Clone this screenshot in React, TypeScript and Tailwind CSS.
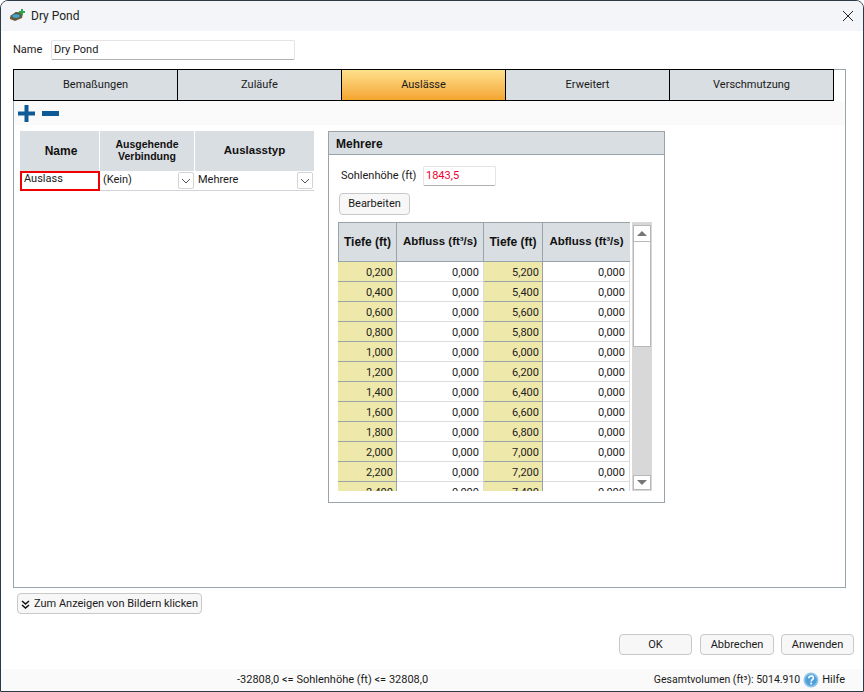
import type { ReactNode } from "react";

const tabs = ["Bemaßungen", "Zuläufe", "Auslässe", "Erweitert", "Verschmutzung"];

const left = ["0,200", "0,400", "0,600", "0,800", "1,000", "1,200", "1,400", "1,600", "1,800", "2,000", "2,200", "2,400"];
const right = ["5,200", "5,400", "5,600", "5,800", "6,000", "6,200", "6,400", "6,600", "6,800", "7,000", "7,200", "7,400"];

function HeadCell({ className, children }: { className: string; children: ReactNode }) {
  return (
    <div className={`flex items-center justify-center whitespace-nowrap bg-[#d9dee2] text-center font-['Liberation_Sans',sans-serif] font-bold text-[#111] ${className}`}>
      {children}
    </div>
  );
}

function Chevron() {
  return (
    <svg width="10" height="6" viewBox="0 0 10 6" fill="none" stroke="#555" strokeWidth="1">
      <path d="M1 1l4 4 4-4" />
    </svg>
  );
}

function Combo({ label, className }: { label: string; className: string }) {
  return (
    <div className={`flex h-5 items-center justify-between border-b border-[#d0d4d8] bg-white pl-[3px] ${className}`}>
      <span>{label}</span>
      <span className="mr-px flex h-[17px] w-4 items-center justify-center rounded-[2px] border border-[#d4d4d4] bg-white">
        <Chevron />
      </span>
    </div>
  );
}

function WinButton({ className, children }: { className: string; children: ReactNode }) {
  return (
    <button className={`flex items-center justify-center whitespace-nowrap rounded-[4px] border border-[#c8c8c8] bg-[#f7f7f7] pt-px text-[#1a1a1a] ${className}`}>
      {children}
    </button>
  );
}

function PondIcon() {
  return (
    <svg width="16" height="14" viewBox="0 0 16 14">
      <path d="M1 8l6-5 7 1-1 5-7 3-5-2z" fill="#6b5a3a" />
      <path d="M1 7l6-4 7 1-2 4-6 2z" fill="#59604a" />
      <ellipse cx="7" cy="7" rx="3.6" ry="1.8" fill="#3fa6d8" />
      <path d="M12 0h2v2h2v2h-2v2h-2V4h-2V2h2z" fill="#2aa84a" />
    </svg>
  );
}

function HelpIcon() {
  return (
    <svg width="16" height="16" viewBox="0 0 16 16">
      <circle cx="8" cy="8" r="7.5" fill="#8cc4ea" />
      <circle cx="8" cy="8" r="5.8" fill="#4f9fd9" />
      <path d="M5.8 6.2c0-3 4.6-3 4.6-.2 0 1.7-2.2 1.7-2.2 3.4" fill="none" stroke="#fff" strokeWidth="1.6" />
      <rect x="7.3" y="10.6" width="1.8" height="1.8" fill="#fff" />
    </svg>
  );
}

function Scrollbar() {
  return (
    <div className="ml-0.5 flex h-[269px] w-5 flex-col bg-[#d8d8d8] pt-[3px]">
      <div className="mx-px flex h-[17px] w-[18px] items-center justify-center border border-[#b8b8b8] bg-white">
        <span className="h-0 w-0 border-x-[5px] border-b-[5px] border-x-transparent border-b-[#777]" />
      </div>
      <div className="mx-px h-[105px] w-[18px] border-x border-b border-[#b8b8b8] bg-white" />
      <div className="flex-1" />
      <div className="mx-px mb-px flex h-[15px] w-[18px] items-center justify-center border border-[#b8b8b8] bg-white">
        <span className="h-0 w-0 border-x-[5px] border-t-[5px] border-x-transparent border-t-[#777]" />
      </div>
    </div>
  );
}

export default function App() {
  return (
    <div className="flex h-[692px] w-[864px] flex-col overflow-hidden rounded-t-lg border border-[#2c3a48] bg-white font-['Roboto',sans-serif] text-[11px] text-[#1a1a1a]">
      {/* title bar */}
      <div className="flex h-[30px] shrink-0 items-center justify-between bg-[#f3f5f8] pl-2 pr-[9px]">
        <div className="flex items-center gap-1.5">
          <PondIcon />
          <span className="text-[12px] text-[#222]">Dry Pond</span>
        </div>
        <svg width="12" height="12" viewBox="0 0 12 12" stroke="#222" strokeWidth="1">
          <path d="M1 1l10 10M11 1L1 11" />
        </svg>
      </div>

      {/* name row */}
      <div className="mt-[9px] flex h-5 items-center pl-3">
        <span className="w-[38px]">Name</span>
        <div className="flex h-5 w-[244px] items-center rounded-[2px] border border-[#e4e4e4] border-b-[#b0b0b0] pl-[2px]">
          Dry Pond
        </div>
      </div>

      {/* tab panel */}
      <div className="ml-3 mt-[9px] flex h-[519px] w-[833px] shrink-0 flex-col border border-[#9aa3a8]">
        <div className="-ml-px -mt-px flex h-8 w-[821px] shrink-0 border border-black bg-[#d9dee2]">
          {tabs.map((t, i) => (
            <div
              key={t}
              className={
                t === "Auslässe"
                  ? "flex flex-1 items-center justify-center border-r border-black bg-gradient-to-b from-[#fde08a] to-[#f4a52c] pt-px"
                  : i === 4
                    ? "flex flex-1 items-center justify-center pt-px"
                    : "flex flex-1 items-center justify-center border-r border-black pt-px"
              }
            >
              {t}
            </div>
          ))}
        </div>

        {/* add / remove toolbar */}
        <div className="flex h-6 shrink-0 items-center gap-[7px] bg-[#fafafa] px-1">
          <svg width="17" height="17" viewBox="0 0 17 17" fill="#0d5a96">
            <path d="M6.5 0h4v6.5H17v4h-6.5V17h-4v-6.5H0v-4h6.5z" />
          </svg>
          <svg width="17" height="5" viewBox="0 0 17 5" fill="#0d5a96">
            <rect width="17" height="5" />
          </svg>
        </div>

        <div className="mt-1.5 flex items-start pl-[6px]">
          {/* outlet grid */}
          <div className="w-[294px]">
            <div className="flex h-10">
              <HeadCell className="w-[79px] pl-[3px] text-[12px]">Name</HeadCell>
              <HeadCell className="ml-px w-[94px] pb-0.5 text-[10.5px] leading-[12px]">
                Ausgehende
                <br />
                Verbindung
              </HeadCell>
              <HeadCell className="ml-px w-[119px] text-[11.5px]">Auslasstyp</HeadCell>
            </div>
            <div className="flex h-5">
              <div className="h-5 w-[80px] border-2 border-[#f00000] pl-[2px] leading-[11px]">Auslass</div>
              <Combo label="(Kein)" className="w-[95px]" />
              <Combo label="Mehrere" className="w-[119px]" />
            </div>
          </div>

          {/* Mehrere panel */}
          <div className="ml-[14px] h-[372px] w-[337px] border border-[#9aa3a8]">
            <div className="flex h-[23px] items-center border-b border-[#9aa3a8] bg-[#d9dee2] pl-[7px] pt-px font-['Liberation_Sans',sans-serif] text-xs font-bold text-[#111]">
              Mehrere
            </div>
            <div className="mt-[11px] flex h-5 items-center pl-3">
              <span className="w-[82px] whitespace-nowrap">Sohlenhöhe (ft)</span>
              <div className="flex h-5 w-[73px] items-center rounded-[2px] border border-[#e4e4e4] border-b-[#b0b0b0] pl-[2px] text-[#f00030]">
                1843,5
              </div>
            </div>
            <WinButton className="ml-[10px] mt-[7px] h-[22px] w-[71px]">Bearbeiten</WinButton>

            <div className="ml-[9px] mt-[7px] flex items-start">
              <div className="h-[269px] w-[292px] overflow-hidden border-t border-[#9aa3a8]">
                <div className="flex h-[39px] border-b border-[#9aa3a8]">
                  <HeadCell className="w-[59px] border-x border-[#9aa3a8] text-xs">Tiefe (ft)</HeadCell>
                  <HeadCell className="w-[87px] border-r border-[#9aa3a8] text-[11.5px]">Abfluss (ft³/s)</HeadCell>
                  <HeadCell className="w-[59px] border-r border-[#9aa3a8] text-xs">Tiefe (ft)</HeadCell>
                  <HeadCell className="w-[87px] text-[11.5px]">Abfluss (ft³/s)</HeadCell>
                </div>
                {left.map((v, i) => (
                  <div key={v} className="flex h-5 text-right text-[#222]">
                    <div className="w-[59px] border-r border-b border-[#9aa3a8] bg-[#efe8ab] pr-[3px] leading-[21px]">{v}</div>
                    <div className="w-[87px] border-r border-b border-[#dcdcdc] pr-[4px] leading-[21px]">0,000</div>
                    <div className="w-[59px] border-r border-b border-[#9aa3a8] bg-[#efe8ab] pr-[3px] leading-[21px]">{right[i]}</div>
                    <div className="w-[87px] border-r border-b border-[#dcdcdc] pr-[4px] leading-[21px]">0,000</div>
                  </div>
                ))}
              </div>
              <Scrollbar />
            </div>
          </div>
        </div>
      </div>

      <WinButton className="ml-4 mt-[5px] h-[21px] w-[185px] gap-1">
        <svg width="9" height="9" viewBox="0 0 9 9" fill="none" stroke="#111" strokeWidth="1.6">
          <path d="M1 1l3.5 3L8 1M1 5l3.5 3L8 5" />
        </svg>
        Zum Anzeigen von Bildern klicken
      </WinButton>

      <div className="mt-5 flex justify-end pr-[9px]">
        <WinButton className="h-[21px] w-[73px]">OK</WinButton>
        <WinButton className="ml-2 h-[21px] w-[74px]">Abbrechen</WinButton>
        <WinButton className="ml-[7px] h-[21px] w-[73px]">Anwenden</WinButton>
      </div>

      {/* status bar */}
      <div className="mt-[14px] flex flex-1 items-center justify-between bg-[#fafafa] pl-[236px] pr-[18px]">
        <span>-32808,0 &lt;= Sohlenhöhe (ft) &lt;= 32808,0</span>
        <span className="flex items-center gap-[3px]">
          <span className="text-[10.5px]">Gesamtvolumen (ft³): 5014.910</span>
          <HelpIcon />
          Hilfe
        </span>
      </div>
    </div>
  );
}
